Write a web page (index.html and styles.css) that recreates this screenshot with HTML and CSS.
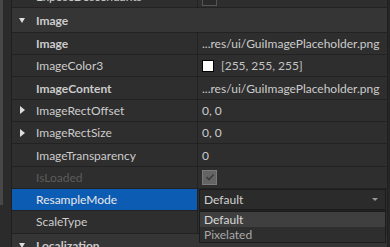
FILE: index.html
```html
<!DOCTYPE html>
<html>
<head>
<meta charset="utf-8">
<link rel="stylesheet" href="styles.css">
</head>
<body>
<div class="app">
  <div class="gutter"><div class="gutter-light"></div></div>
  <div class="panel">
    <div class="row top">
      <div class="name"><span class="arrow"></span><span class="label">ExposeDescendants</span></div>
      <div class="value"><span class="check dark"></span></div>
    </div>
    <div class="row header">
      <div class="name full"><span class="arrow"><span class="tri-down"></span></span><span class="label bold">Image</span></div>
    </div>
    <div class="row">
      <div class="name"><span class="arrow"></span><span class="label bold">Image</span></div>
      <div class="value">...res/ui/GuiImagePlaceholder.png</div>
    </div>
    <div class="row">
      <div class="name"><span class="arrow"></span><span class="label">ImageColor3</span></div>
      <div class="value"><span class="swatch"></span><span class="swatch-text">[255, 255, 255]</span></div>
    </div>
    <div class="row">
      <div class="name"><span class="arrow"></span><span class="label bold">ImageContent</span></div>
      <div class="value">...res/ui/GuiImagePlaceholder.png</div>
    </div>
    <div class="row">
      <div class="name"><span class="arrow"><span class="tri-right"></span></span><span class="label">ImageRectOffset</span></div>
      <div class="value">0, 0</div>
    </div>
    <div class="row">
      <div class="name"><span class="arrow"><span class="tri-right"></span></span><span class="label">ImageRectSize</span></div>
      <div class="value">0, 0</div>
    </div>
    <div class="row">
      <div class="name"><span class="arrow"></span><span class="label">ImageTransparency</span></div>
      <div class="value">0</div>
    </div>
    <div class="row">
      <div class="name"><span class="arrow"></span><span class="label disabled">IsLoaded</span></div>
      <div class="value"><span class="check grey"><svg width="10" height="8" viewBox="0 0 10 8"><path d="M1.5 4.2 L4 6.5 L8.5 1.5" fill="none" stroke="#3c3c3c" stroke-width="1.6"/></svg></span></div>
    </div>
    <div class="row">
      <div class="name selected"><span class="arrow"></span><span class="label">ResampleMode</span></div>
      <div class="value dd-cell">
        <div class="dd-input"><span>Default</span><span class="dd-caret"></span></div>
        <div class="dd-list">
          <div class="dd-item hl">Default</div>
          <div class="dd-item">Pixelated</div>
        </div>
      </div>
    </div>
    <div class="row">
      <div class="name"><span class="arrow"></span><span class="label">ScaleType</span></div>
      <div class="value"></div>
    </div>
    <div class="row header">
      <div class="name full"><span class="arrow"><span class="tri-down"></span></span><span class="label bold">Localization</span></div>
    </div>
  </div>
  <div class="edge"></div>
</div>
</body>
</html>
```
FILE: styles.css
```css
* { box-sizing: border-box; }
html, body {
  margin: 0;
  padding: 0;
  width: 390px;
  height: 247px;
  overflow: hidden;
  background: #2e2e2e;
}
.app {
  display: flex;
  width: 390px;
  height: 247px;
  overflow: hidden;
  font-family: "Lato", "Open Sans", sans-serif;
  font-size: 12px;
  color: #cccccc;
}
.gutter {
  width: 12px;
  flex: none;
  display: flex;
  background: #2b2b2b;
  border-right: 1px solid #1f1f1f;
}
.gutter-light {
  width: 3px;
  height: 205px;
  background: #484848;
}
.panel {
  flex: 1;
  display: flex;
  flex-direction: column;
  overflow: hidden;
}
.edge {
  width: 3px;
  flex: none;
  background: #262626;
  border-left: 1px solid #1f1f1f;
}
.row {
  flex: none;
  height: 22.3px;
  display: grid;
  grid-template-columns: 186px 1fr;
  border-bottom: 1px solid #222222;
  background: #2e2e2e;
}
.row.top {
  margin-top: -14px;
}
.row.header {
  height: 24.6px;
  background: #353535;
  grid-template-columns: 1fr;
}
.name {
  display: flex;
  align-items: center;
  border-right: 1px solid #222222;
  white-space: nowrap;
}
.name.full { border-right: none; }
.name.selected {
  background: #0c5cb3;
  color: #e8e8e8;
}
.arrow {
  width: 24px;
  flex: none;
  display: flex;
  align-items: center;
  padding-left: 7px;
}
.tri-down {
  width: 0; height: 0;
  border-left: 3.5px solid transparent;
  border-right: 3.5px solid transparent;
  border-top: 5px solid #dddddd;
}
.tri-right {
  width: 0; height: 0;
  border-top: 4px solid transparent;
  border-bottom: 4px solid transparent;
  border-left: 5px solid #dddddd;
  margin-left: 1px;
}
.label.bold { font-weight: 700; }
.label.disabled { color: #5c5c5c; }
.value {
  display: flex;
  align-items: center;
  padding-left: 4px;
  white-space: nowrap;
  position: relative;
}
.check {
  width: 15px;
  height: 15px;
  display: flex;
  align-items: center;
  justify-content: center;
}
.check.dark {
  background: #2a2a2a;
  border: 1px solid #555555;
  margin-top: 4px;
}
.check.grey {
  background: #646464;
  border: 1px solid #7a7a7a;
}
.swatch {
  width: 12px;
  height: 12px;
  background: #ffffff;
  border: 1px solid #000000;
  margin-right: 7px;
}
.swatch-text { color: #c4c4c4; }
.dd-cell { padding-left: 1px; }
.dd-input {
  width: 187px;
  height: 100%;
  display: flex;
  align-items: center;
  justify-content: space-between;
  padding: 0 7px 0 4px;
  background: #2b2b2b;
  border: 1px solid #1c1c1c;
  color: #d0d0d0;
}
.dd-caret {
  width: 0; height: 0;
  border-left: 3px solid transparent;
  border-right: 3px solid transparent;
  border-top: 3px solid #9a9a9a;
}
.dd-list {
  position: absolute;
  left: 1px;
  top: 22px;
  width: 187px;
  background: #2e2e2e;
  border: 1px solid #1c1c1c;
  z-index: 5;
}
.dd-item {
  height: 15px;
  line-height: 15px;
  padding-left: 4px;
  color: #a9a9a9;
}
.dd-item.hl {
  background: #3f3f3f;
  color: #d8d8d8;
}
```
